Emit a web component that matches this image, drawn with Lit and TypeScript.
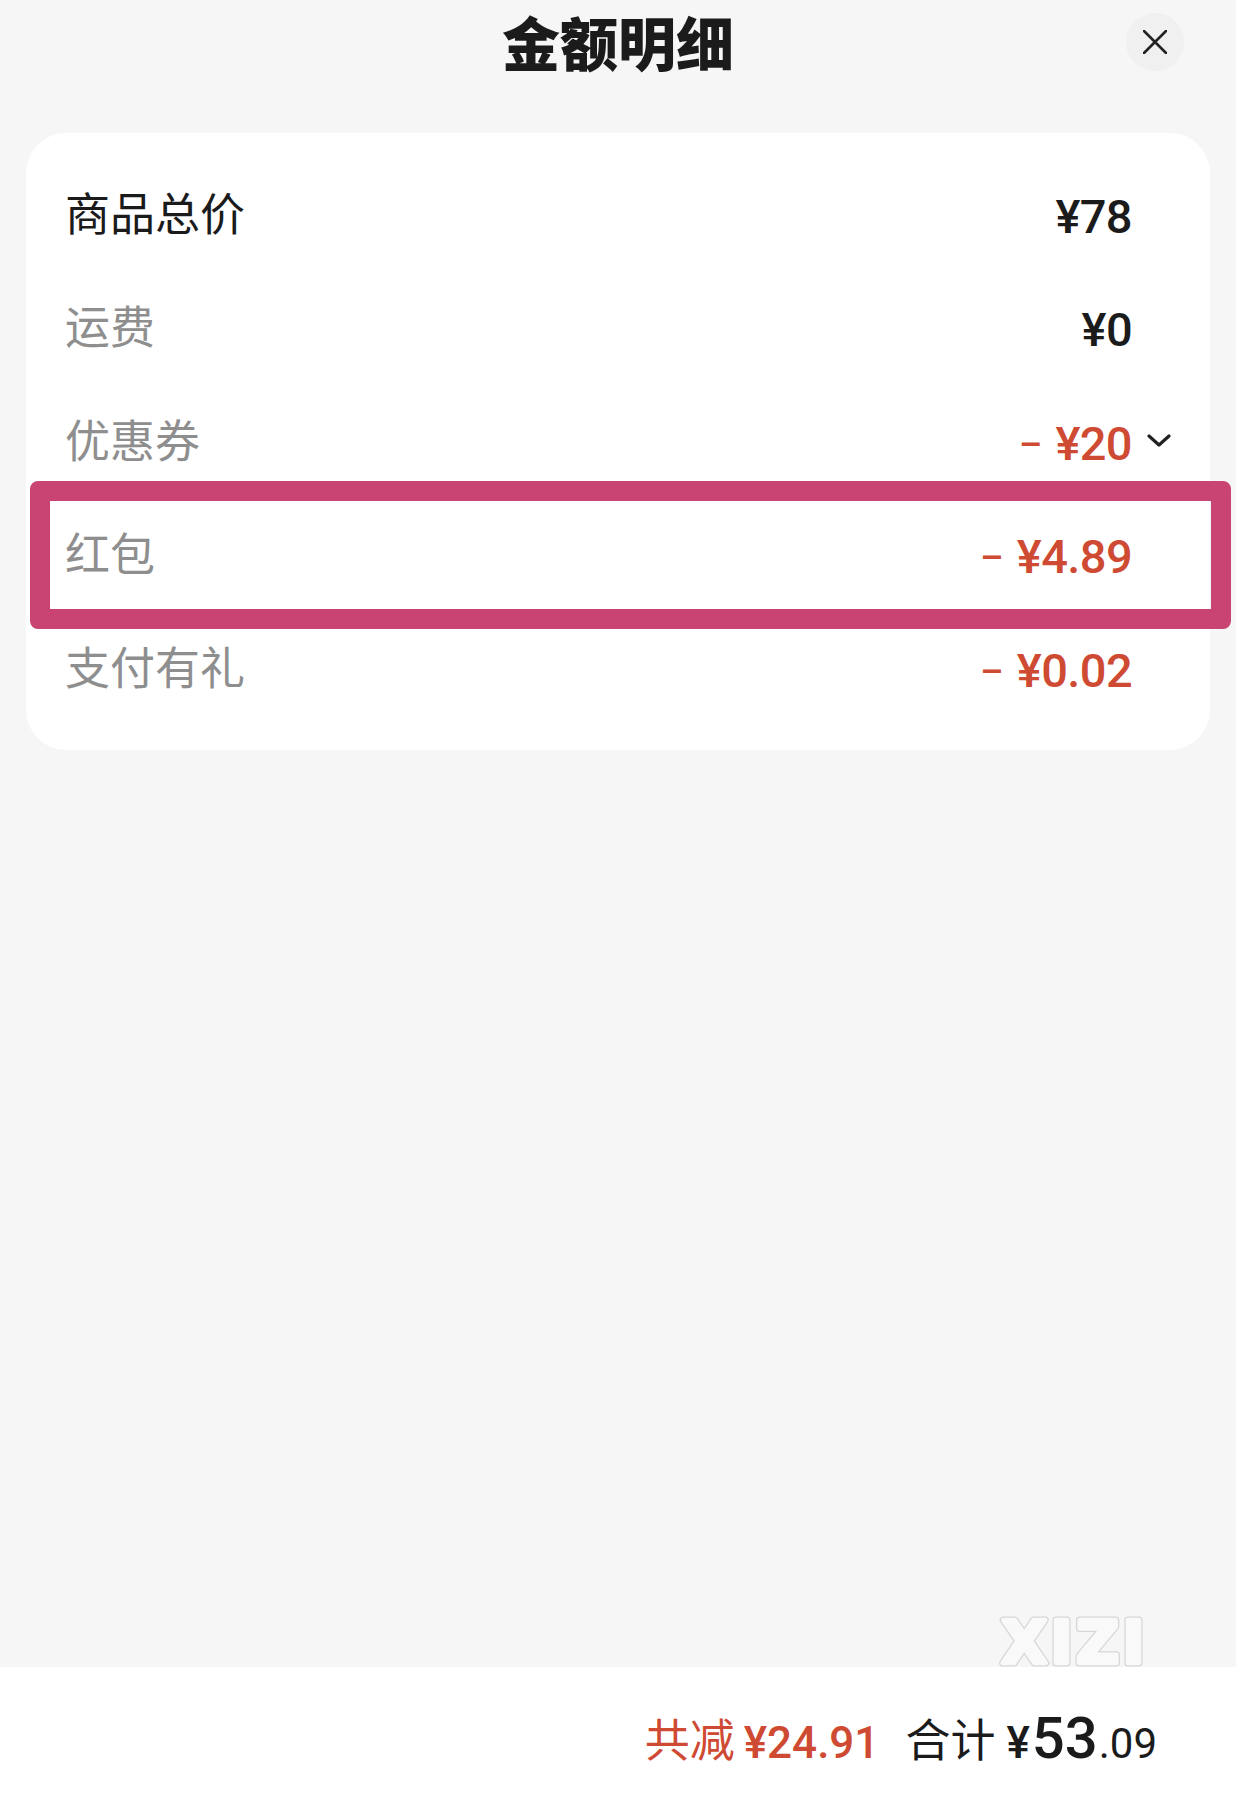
import { LitElement, html, css, nothing } from "lit";
import { customElement } from "lit/decorators.js";

interface Row {
  label: string;
  value: string;
  muted?: boolean;
  minus?: boolean;
  expand?: boolean;
  marked?: boolean;
}

const rows: Row[] = [
  { label: "商品总价", value: "¥78" },
  { label: "运费", value: "¥0", muted: true },
  { label: "优惠券", value: "¥20", muted: true, minus: true, expand: true },
  { label: "红包", value: "¥4.89", muted: true, minus: true, marked: true },
  { label: "支付有礼", value: "¥0.02", muted: true, minus: true },
];

@customElement("app-root")
export class AppRoot extends LitElement {
  private renderRow(row: Row) {
    return html`
      <div class="row">
        <span class="label ${row.muted ? "muted" : ""}">${row.label}</span>
        <span class="amount ${row.minus ? "red" : ""}">
          ${row.minus ? html`<span class="minus">–</span>` : nothing}${row.value}
        </span>
        <span class="slot">
          ${row.expand
            ? html`<svg class="chevron" viewBox="0 0 24 13" fill="none">
                <path d="M2 2 L12 11 L22 2" stroke="#222" stroke-width="3.2" stroke-linecap="round" stroke-linejoin="round" />
              </svg>`
            : nothing}
        </span>
        ${row.marked ? html`<div class="mark"></div>` : nothing}
      </div>
    `;
  }

  protected render() {
    return html`
      <header class="head">
        <h1 class="title">金额明细</h1>
        <button class="close" aria-label="关闭">
          <svg viewBox="0 0 24 24" width="24" height="24" fill="none">
            <path d="M1 1 L23 23 M23 1 L1 23" stroke="#222" stroke-width="2.6" stroke-linecap="round" />
          </svg>
        </button>
      </header>

      <main class="body">
        <section class="card">${rows.map((row) => this.renderRow(row))}</section>
        <svg class="watermark" viewBox="0 0 160 56" width="160" height="56">
          <defs>
            <text id="wm" x="80" y="52" text-anchor="middle" textLength="143" lengthAdjust="spacing">XIZI</text>
          </defs>
          <use href="#wm" class="wm-edge" />
          <use href="#wm" class="wm-fill" />
        </svg>
      </main>

      <footer class="foot">
        <span class="saved">共减</span>
        <span class="saved-amount">¥24.91</span>
        <span class="total-label">合计</span>
        <span class="total">
          <span class="yen">¥</span><span class="int">53</span><span class="dec">.09</span>
        </span>
      </footer>
    `;
  }

  static styles = css`
    :host {
      display: flex;
      flex-direction: column;
      width: 1236px;
      height: 1796px;
      background: #f6f6f6;
      color: #1b1b1b;
      font-family: "Noto Sans CJK SC", "Noto Sans", sans-serif;
    }

    .head {
      position: relative;
      height: 133px;
      flex: none;
      display: flex;
      justify-content: center;
    }

    .title {
      margin: 4px 0 0;
      font-size: 58px;
      font-weight: 900;
      line-height: 74px;
    }

    .close {
      position: absolute;
      left: 1126px;
      top: 13px;
      width: 58px;
      height: 58px;
      padding: 0;
      border: 0;
      border-radius: 50%;
      background: #f0f0f0;
      display: flex;
      align-items: center;
      justify-content: center;
    }

    .body {
      position: relative;
      flex: 1;
      padding: 0 26px;
    }

    .card {
      background: #fff;
      border-radius: 40px;
      padding: 24px 0 25.5px 39px;
    }

    .row {
      position: relative;
      height: 113.5px;
      display: grid;
      grid-template-columns: 1fr auto 78px;
      align-items: center;
    }

    .label {
      font-size: 45px;
      line-height: 1;
      padding-bottom: 5px;
    }

    .muted {
      color: #8e8e8e;
    }

    .amount {
      font-family: Roboto, "Liberation Sans", sans-serif;
      font-size: 47px;
      font-weight: 500;
      letter-spacing: -0.6px;
      line-height: 1;
      white-space: nowrap;
      padding-top: 5px;
    }

    .red {
      color: #cf4a33;
    }

    .minus {
      font-size: 36px;
      font-weight: 500;
      margin-right: 14px;
      vertical-align: 3px;
    }

    .slot {
      display: flex;
      padding-left: 15px;
    }

    .chevron {
      width: 24px;
      height: 13px;
    }

    .mark {
      position: absolute;
      left: -35px;
      right: -21px;
      top: -17px;
      height: 148px;
      box-sizing: border-box;
      border: 20px solid #c94473;
      border-radius: 8px;
      pointer-events: none;
    }

    .watermark {
      position: absolute;
      left: 993px;
      bottom: 0;
      font-family: "DejaVu Sans", sans-serif;
      font-size: 59px;
      font-weight: 700;
    }

    .wm-edge {
      fill: #d6d6d6;
      stroke: #d6d6d6;
      stroke-width: 7;
      stroke-linejoin: round;
    }

    .wm-fill {
      fill: #f9f9f9;
      stroke: #f9f9f9;
      stroke-width: 4.5;
      stroke-linejoin: round;
    }

    .foot {
      height: 129px;
      flex: none;
      background: #fff;
      box-sizing: border-box;
      display: flex;
      align-items: baseline;
      justify-content: flex-end;
      padding: 41px 79px 0 0;
      line-height: 60px;
    }

    .saved,
    .total-label {
      font-size: 45px;
      transform: translateY(-1px);
    }

    .saved {
      color: #cf4a33;
    }

    .saved-amount {
      margin-left: 9px;
      margin-right: 26px;
      color: #cf4a33;
      font-family: Roboto, "Liberation Sans", sans-serif;
      font-size: 44px;
      font-weight: 500;
    }

    .total {
      margin-left: 11px;
      font-family: Roboto, "Liberation Sans", sans-serif;
      white-space: nowrap;
    }

    .yen {
      font-size: 44px;
      font-weight: 500;
    }

    .int {
      font-size: 58px;
      font-weight: 500;
      margin-left: 2px;
    }

    .dec {
      font-size: 42px;
      margin-left: 1px;
    }
  `;
}
